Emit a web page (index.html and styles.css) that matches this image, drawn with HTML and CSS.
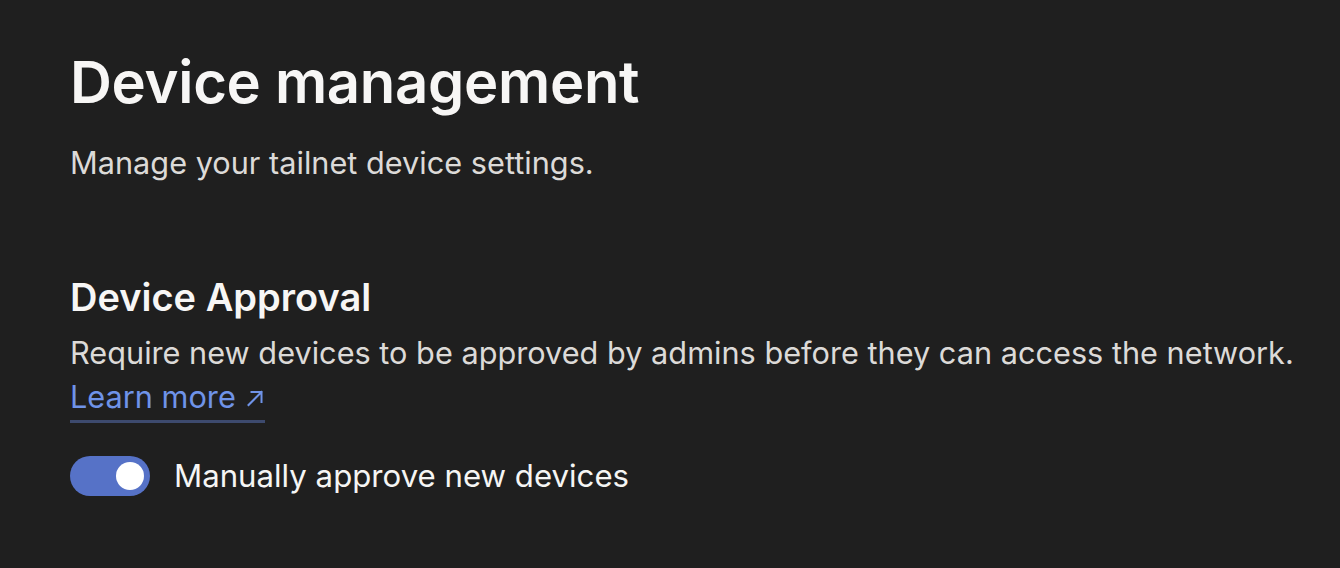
FILE: index.html
```html
<!DOCTYPE html>
<html>
<head>
<meta charset="utf-8">
<link rel="stylesheet" href="styles.css">
</head>
<body>
<main class="page">
  <header class="page-header">
    <h1 class="title">Device management</h1>
    <p class="subtitle">Manage your tailnet device settings.</p>
  </header>
  <section class="section">
    <h2 class="section-title">Device Approval</h2>
    <p class="section-desc">Require new devices to be approved by admins before they can access the network.<br><a class="link" href="#">Learn more <svg class="arrow" viewBox="0 0 20 20" width="20" height="20"><path d="M3.5 17 L16.5 4 M6.5 4 H16.5 V14" fill="none" stroke="currentColor" stroke-width="2" stroke-linecap="square"/></svg></a></p>
    <label class="toggle-row">
      <span class="toggle"><span class="knob"></span></span>
      <span class="toggle-label">Manually approve new devices</span>
    </label>
  </section>
</main>
</body>
</html>
```
FILE: styles.css
```css
html, body {
  margin: 0;
  padding: 0;
  background: #1f1f1f;
}
body {
  font-family: Inter, "Noto Sans", sans-serif;
  color: #f5f5f4;
}
.page {
  padding: 44px 20px 0 70px;
}
.title {
  margin: 0;
  font-size: 58px;
  font-weight: 600;
  line-height: 76px;
  letter-spacing: -0.3px;
  color: #f7f6f5;
}
.subtitle {
  margin: 21px 0 0 0;
  font-size: 30.7px;
  line-height: 44px;
  color: #dcdad8;
}
.section {
  margin-top: 88px;
}
.section-title {
  margin: 0;
  font-size: 38px;
  font-weight: 600;
  line-height: 48px;
  color: #f7f6f5;
}
.section-desc {
  margin: 10px 0 0 0;
  font-size: 30.7px;
  line-height: 44px;
  color: #dcdad8;
}
.link {
  color: #6f93e8;
  text-decoration: none;
  border-bottom: 3px solid #3d4a6e;
  padding-bottom: 5px;
}
.arrow {
  display: inline-block;
  vertical-align: baseline;
  margin-left: 1px;
}
.toggle-row {
  display: flex;
  align-items: center;
  gap: 24px;
  margin-top: 37px;
}
.toggle {
  width: 80px;
  height: 40px;
  border-radius: 20px;
  background: #5672c7;
  display: flex;
  align-items: center;
  justify-content: flex-end;
  padding: 0 6px;
  box-sizing: border-box;
  flex: none;
}
.knob {
  width: 28px;
  height: 28px;
  border-radius: 50%;
  background: #ffffff;
}
.toggle-label {
  font-size: 31.2px;
  line-height: 40px;
  color: #f5f5f4;
}
```
